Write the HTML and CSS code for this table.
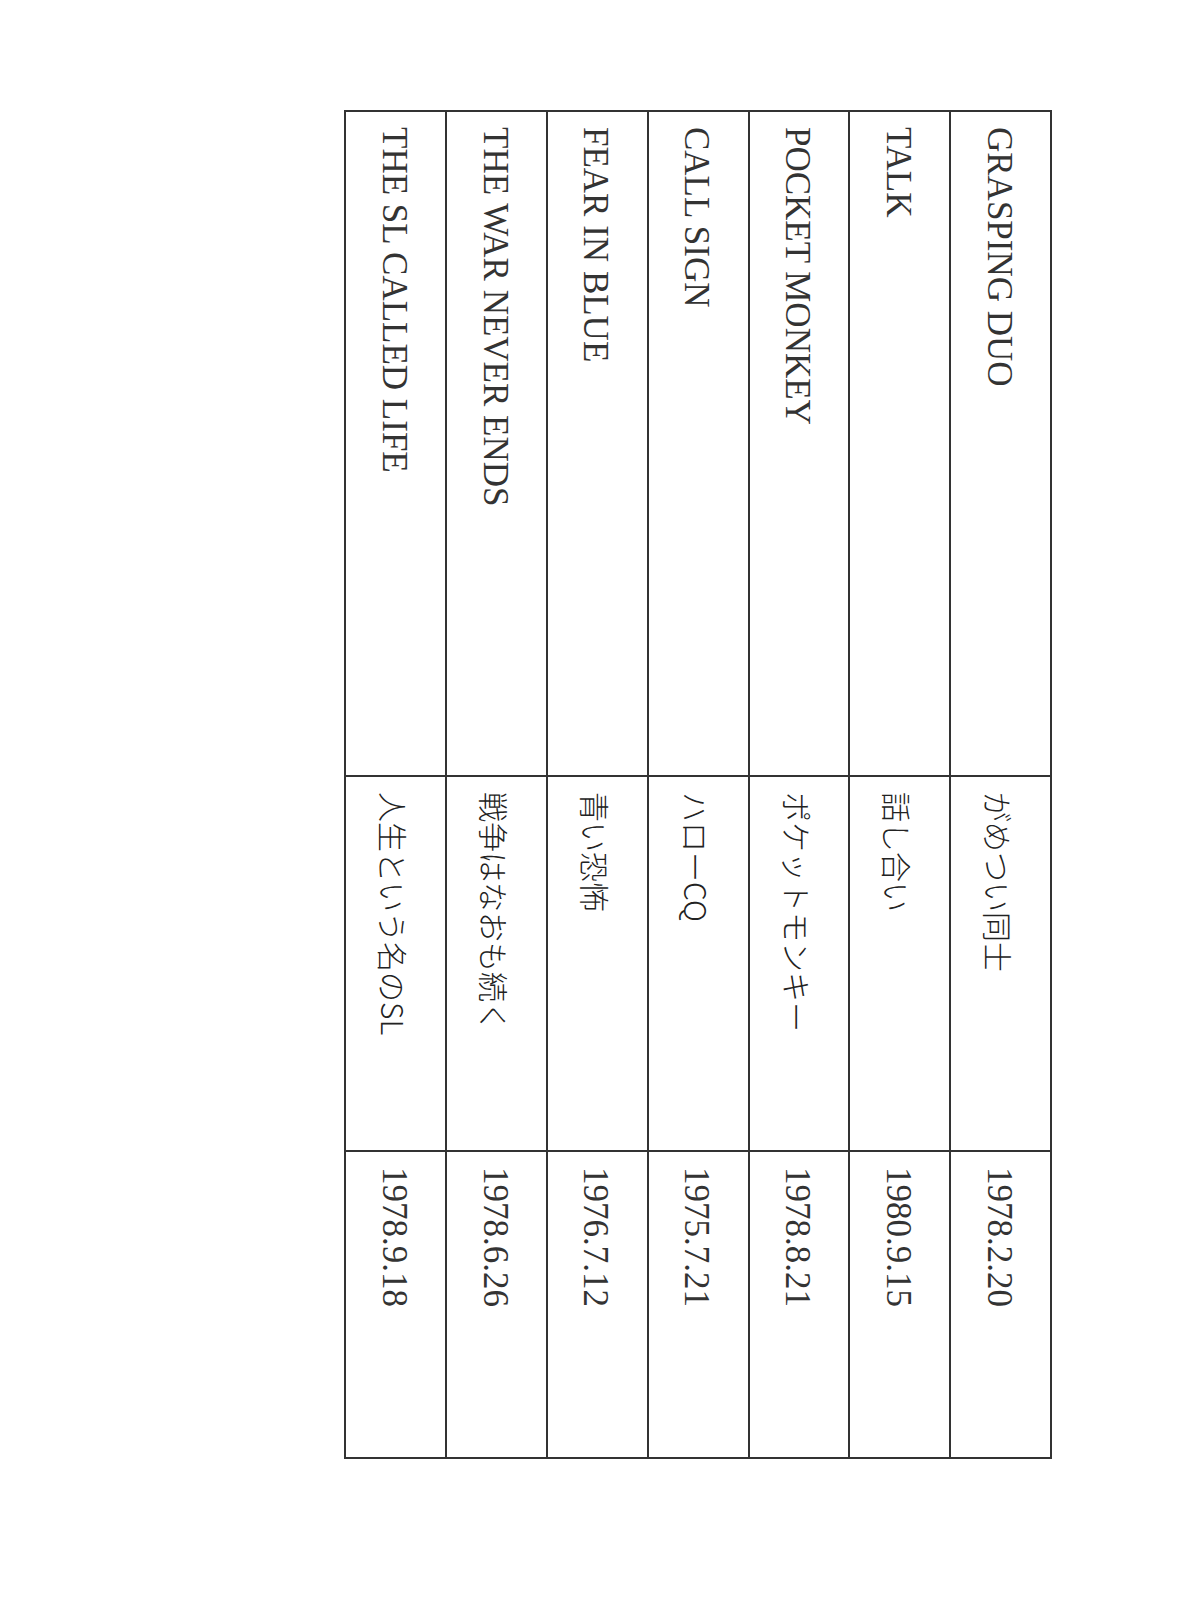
FILE: index.html
```html
<!DOCTYPE html>
<html lang="ja">
<head>
<meta charset="utf-8">
<title>Songs</title>
<link rel="stylesheet" href="styles.css">
</head>
<body>
<div class="page">
  <table class="songs">
    <colgroup>
      <col class="col-en">
      <col class="col-jp">
      <col class="col-date">
    </colgroup>
    <tbody>
      <tr><td class="en">GRASPING DUO</td><td class="jp">がめつい同士</td><td class="date">1978.2.20</td></tr>
      <tr><td class="en">TALK</td><td class="jp">話し合い</td><td class="date">1980.9.15</td></tr>
      <tr><td class="en">POCKET MONKEY</td><td class="jp">ポケットモンキー</td><td class="date">1978.8.21</td></tr>
      <tr><td class="en">CALL SIGN</td><td class="jp">ハローCQ</td><td class="date">1975.7.21</td></tr>
      <tr><td class="en">FEAR IN BLUE</td><td class="jp">青い恐怖</td><td class="date">1976.7.12</td></tr>
      <tr><td class="en">THE WAR NEVER ENDS</td><td class="jp">戦争はなおも続く</td><td class="date">1978.6.26</td></tr>
      <tr><td class="en">THE SL CALLED LIFE</td><td class="jp">人生という名のSL</td><td class="date">1978.9.18</td></tr>
    </tbody>
  </table>
</div>
</body>
</html>
```

FILE: styles.css
```css
html, body {
  margin: 0;
  padding: 0;
  background: #ffffff;
}

.page {
  padding-top: 110px;
  padding-left: 344px;
}

.songs {
  writing-mode: vertical-rl;
  text-orientation: sideways;
  border-collapse: collapse;
  table-layout: fixed;
  inline-size: 1347px;
  font-family: "Liberation Serif", "Times New Roman", serif;
  font-size: 35px;
  color: #333333;
}

.col-en { inline-size: 665px; }
.col-jp { inline-size: 375px; }
.col-date { inline-size: 307px; }

.songs td {
  border: 2px solid #333333;
  block-size: 94.9px;
  padding-block-start: 4px;
  padding-block-end: 0;
  padding-inline-start: 15px;
  padding-inline-end: 0;
  vertical-align: middle;
  white-space: nowrap;
  line-height: 1.1;
}

.songs td.jp {
  font-family: "Noto Sans CJK JP", "Liberation Serif", sans-serif;
  font-size: 30px;
  font-weight: 300;
  color: #222222;
}
```
